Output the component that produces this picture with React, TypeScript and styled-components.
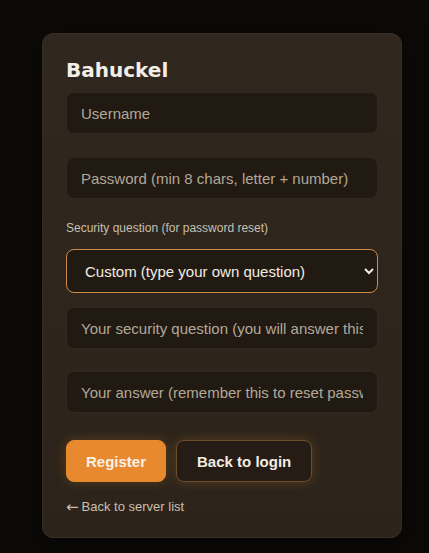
import React, { useState } from "react";
import styled, { createGlobalStyle } from "styled-components";

const GlobalStyle = createGlobalStyle`
  html, body {
    margin: 0;
    padding: 0;
    background: #0b0a08;
    height: 100%;
  }
  body {
    font-family: "Liberation Sans", Arial, sans-serif;
  }
`;

const Page = styled.div`
  min-height: 553px;
  box-sizing: border-box;
  padding: 33px 0 0 42px;
`;

const Card = styled.div`
  width: 360px;
  box-sizing: border-box;
  padding: 24px 24px 23px;
  border-radius: 12px;
  background: linear-gradient(180deg, #30281e 0%, #2c241a 100%);
  box-shadow: inset 0 0 0 1px #362d22, 0 8px 30px rgba(0, 0, 0, 0.5);
  display: flex;
  flex-direction: column;
`;

const Title = styled.h2`
  margin: 0 0 9px;
  font-family: "DejaVu Sans", Verdana, sans-serif;
  font-size: 20px;
  font-weight: 700;
  line-height: 26px;
  color: #f3efe8;
`;

const Field = styled.input<{ $gap?: number }>`
  box-sizing: border-box;
  width: 100%;
  height: 42px;
  margin: 0 0 ${(p) => p.$gap ?? 0}px;
  padding: 0 14px;
  border-radius: 8px;
  border: 1px solid #31291f;
  background: #211a13;
  color: #ece4d8;
  font-family: "Liberation Sans", Arial, sans-serif;
  font-size: 15px;
  outline: none;

  &::placeholder {
    color: #b3a898;
  }
`;

const Label = styled.label`
  display: block;
  margin: 0 0 14px;
  font-family: "Liberation Sans", Arial, sans-serif;
  font-size: 12px;
  line-height: 14px;
  color: #c9bfb2;
`;

const Select = styled.select`
  box-sizing: border-box;
  width: 100%;
  height: 44px;
  margin: 0 0 14px;
  padding: 0 12px 0 14px;
  border-radius: 8px;
  border: 1px solid #d08a48;
  background: #211a13;
  color: #f2ece2;
  font-family: "Liberation Sans", Arial, sans-serif;
  font-size: 15px;
  outline: none;
  color-scheme: dark;
`;

const ButtonRow = styled.div`
  display: flex;
  gap: 10px;
  margin: 5px 0 17px;
`;

const Button = styled.button<{ $primary?: boolean }>`
  height: 42px;
  padding: 0 ${(p) => (p.$primary ? 19 : 20)}px;
  border-radius: 8px;
  font-family: "Liberation Sans", Arial, sans-serif;
  font-size: 15px;
  font-weight: 700;
  cursor: pointer;
  color: ${(p) => (p.$primary ? "#fbf1e4" : "#f1ebe2")};
  background: ${(p) => (p.$primary ? "#e8892f" : "#241c15")};
  border: 1px solid ${(p) => (p.$primary ? "#e8892f" : "#6e4e2e")};
  box-shadow: 0 0 12px rgba(232, 137, 47, 0.24);
`;

const BackLink = styled.a`
  display: flex;
  align-items: center;
  gap: 3px;
  font-family: "Liberation Sans", Arial, sans-serif;
  font-size: 13px;
  line-height: 16px;
  color: #cbbfae;
  text-decoration: none;
  cursor: pointer;
`;

const Arrow = styled.span`
  font-family: "DejaVu Sans", sans-serif;
  font-size: 15px;
  line-height: 16px;
`;

export default function App() {
  const [question, setQuestion] = useState("custom");

  return (
    <>
      <GlobalStyle />
      <Page>
        <Card>
          <Title>Bahuckel</Title>
          <Field $gap={23} placeholder="Username" />
          <Field $gap={22} type="password" placeholder="Password (min 8 chars, letter + number)" />
          <Label>Security question (for password reset)</Label>
          <Select value={question} onChange={(e) => setQuestion(e.target.value)}>
            <option value="custom">Custom (type your own question)</option>
            <option value="pet">What was the name of your first pet?</option>
            <option value="city">In which city were you born?</option>
          </Select>
          <Field $gap={22} placeholder="Your security question (you will answer this later)" />
          <Field $gap={22} placeholder="Your answer (remember this to reset password)" />
          <ButtonRow>
            <Button $primary>Register</Button>
            <Button>Back to login</Button>
          </ButtonRow>
          <BackLink>
            <Arrow>←</Arrow>
            Back to server list
          </BackLink>
        </Card>
      </Page>
    </>
  );
}
